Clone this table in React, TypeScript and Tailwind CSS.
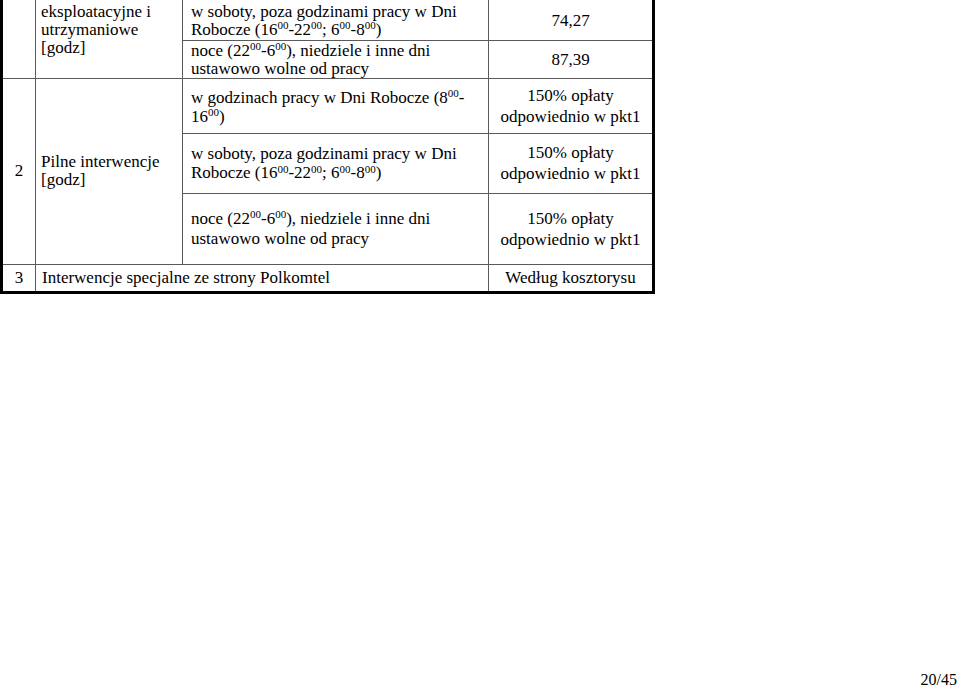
import React from 'react';

// thin inner rules and the heavy outer frame
const cell = 'border border-[#5a5a5a] align-middle p-0';

function Sup({ children }: { children: React.ReactNode }) {
  return <sup className="text-[11px]">{children}</sup>;
}

function Fee({ children }: { children: React.ReactNode }) {
  return (
    <td className={`${cell} border-r-[3px] border-r-black text-center leading-[21px]`}>
      {children}
    </td>
  );
}

export default function App() {
  return (
    <div className="relative w-[960px] h-[691px] bg-white text-black font-['Liberation_Serif',serif] text-[17px]">
      <table className="border-collapse table-fixed w-[652px] border-b-[3px] border-b-black">
        <colgroup>
          <col className="w-[34px]" />
          <col className="w-[147px]" />
          <col className="w-[306px]" />
          <col className="w-[165px]" />
        </colgroup>
        <tbody>
          {/* ── pkt 1, continued from the previous page ── */}
          <tr className="h-[40px]">
            <td rowSpan={2} className={`${cell} border-t-0 border-l-[3px] border-l-black`} />
            <td rowSpan={2} className={`${cell} border-t-0 align-top pl-[5px] pt-[3px] leading-[18px]`}>
              eksploatacyjne i
              <br />
              utrzymaniowe
              <br />
              [godz]
            </td>
            <td className={`${cell} border-t-0 pl-[8px] pt-[2px] leading-[18px]`}>
              w soboty, poza godzinami pracy w Dni
              <br />
              Robocze (16<Sup>00</Sup>-22<Sup>00</Sup>; 6<Sup>00</Sup>-8<Sup>00</Sup>)
            </td>
            <td className={`${cell} border-t-0 border-r-[3px] border-r-black text-center pt-[2px]`}>74,27</td>
          </tr>
          <tr className="h-[37px]">
            <td className={`${cell} pl-[8px] pt-[1px] leading-[18px]`}>
              noce (22<Sup>00</Sup>-6<Sup>00</Sup>), niedziele i inne dni
              <br />
              ustawowo wolne od pracy
            </td>
            <td className={`${cell} border-r-[3px] border-r-black text-center pt-[2px]`}>87,39</td>
          </tr>

          {/* ── pkt 2 ── */}
          <tr className="h-[55px] border-t-[1.5px] border-t-[#3a3a3a]">
            <td rowSpan={3} className={`${cell} border-l-[3px] border-l-black text-center`}>
              2
            </td>
            <td rowSpan={3} className={`${cell} pl-[5px] leading-[18px]`}>
              Pilne interwencje
              <br />
              [godz]
            </td>
            <td className={`${cell} align-top pl-[8px] pt-[9px] leading-[19px]`}>
              w godzinach pracy w Dni Robocze (8<Sup>00</Sup>-
              <br />
              16<Sup>00</Sup>)
            </td>
            <Fee>
              150% opłaty
              <br />
              odpowiednio w pkt1
            </Fee>
          </tr>
          <tr className="h-[60px]">
            <td className={`${cell} pl-[8px] leading-[19px]`}>
              w soboty, poza godzinami pracy w Dni
              <br />
              Robocze (16<Sup>00</Sup>-22<Sup>00</Sup>; 6<Sup>00</Sup>-8<Sup>00</Sup>)
            </td>
            <Fee>
              150% opłaty
              <br />
              odpowiednio w pkt1
            </Fee>
          </tr>
          <tr className="h-[71px]">
            <td className={`${cell} pl-[8px] leading-[20px]`}>
              noce (22<Sup>00</Sup>-6<Sup>00</Sup>), niedziele i inne dni
              <br />
              ustawowo wolne od pracy
            </td>
            <Fee>
              150% opłaty
              <br />
              odpowiednio w pkt1
            </Fee>
          </tr>

          {/* ── pkt 3 ── */}
          <tr className="h-[28px]">
            <td className={`${cell} border-t-[#7a7a7a] border-l-[3px] border-l-black text-center`}>3</td>
            <td colSpan={2} className={`${cell} border-t-[#7a7a7a] pl-[6px]`}>
              Interwencje specjalne ze strony Polkomtel
            </td>
            <td className={`${cell} border-t-[#7a7a7a] border-r-[3px] border-r-black text-center`}>
              Według kosztorysu
            </td>
          </tr>
        </tbody>
      </table>

      <div className="absolute right-[3px] bottom-[2px] text-[16px] leading-[18px]">20/45</div>
    </div>
  );
}
